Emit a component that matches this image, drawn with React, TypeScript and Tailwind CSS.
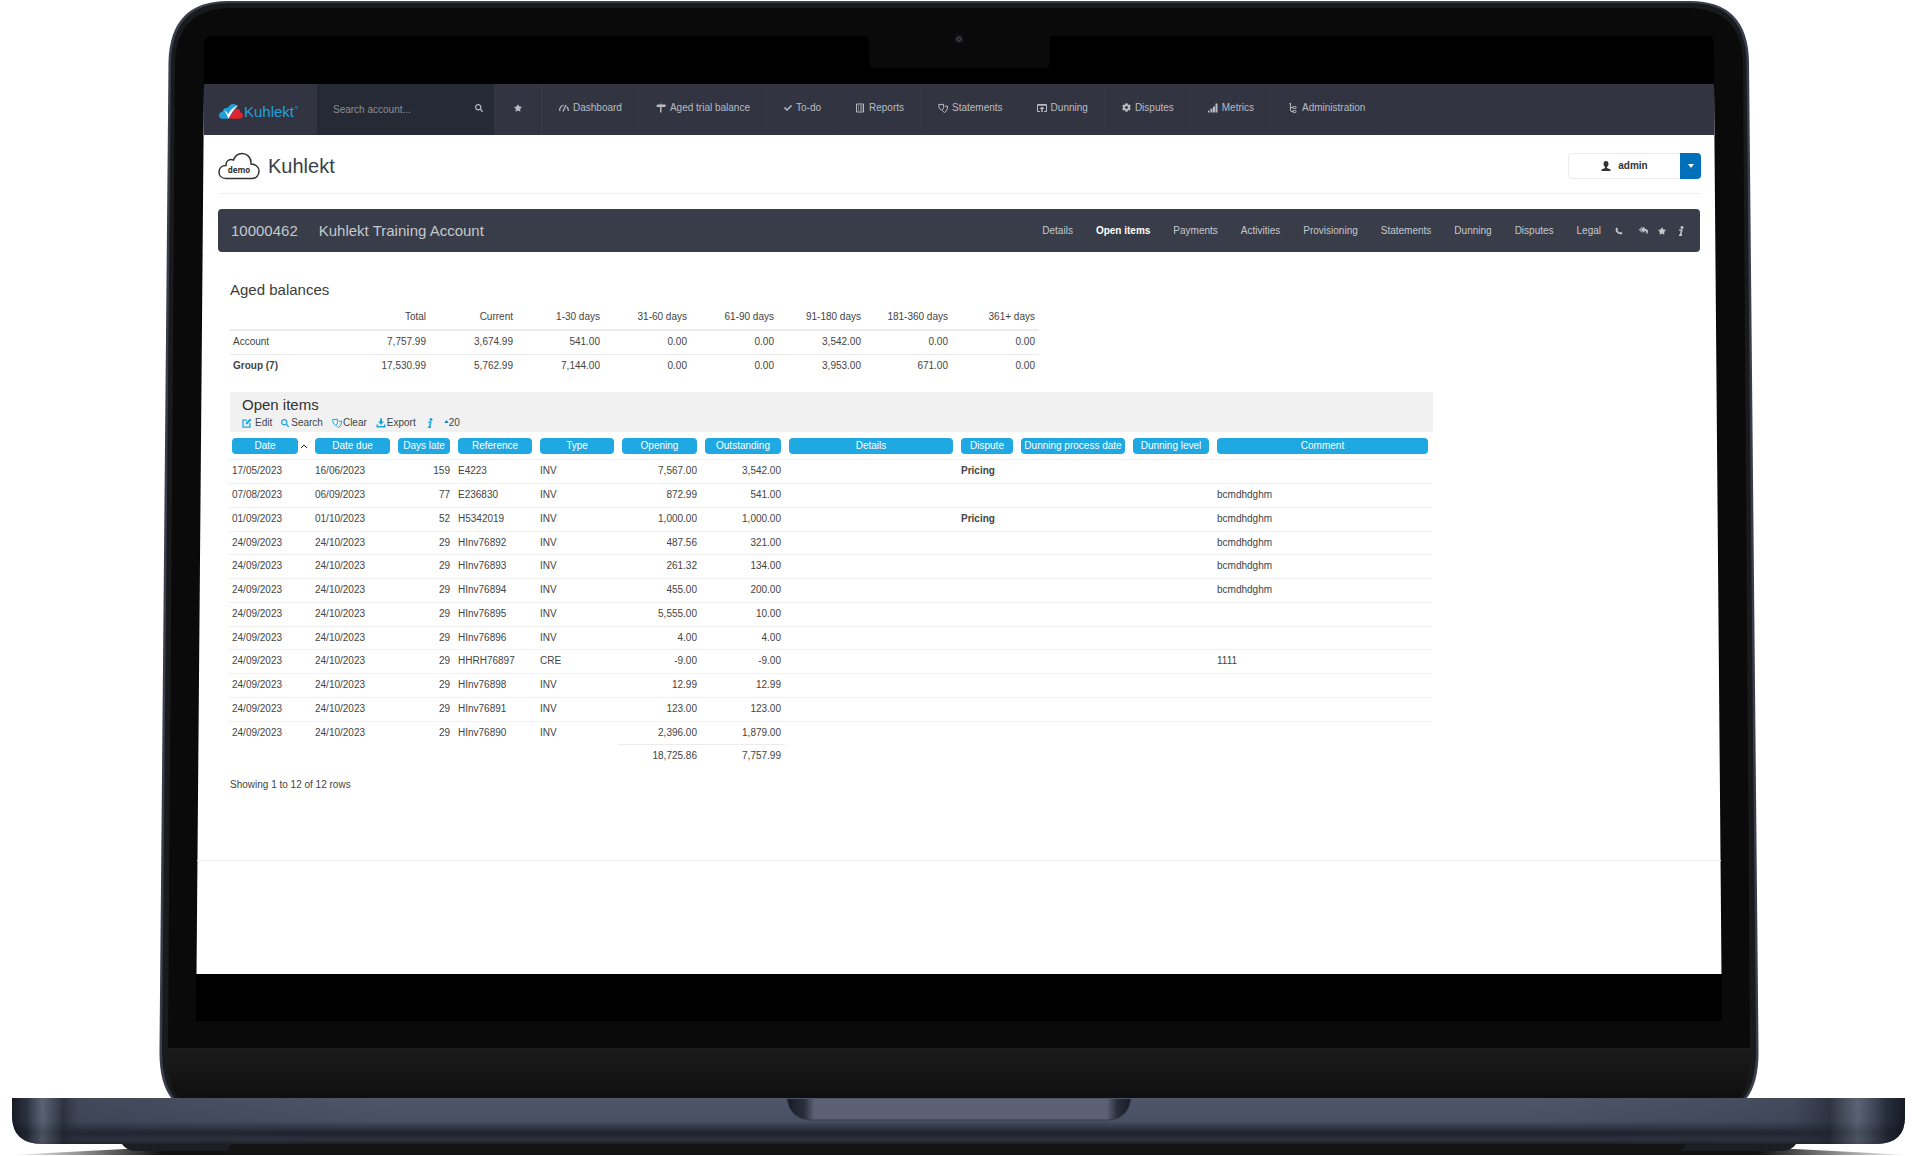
import type { ReactNode } from "react";
import { FaCheck, FaCog, FaPhoneAlt, FaReplyAll, FaSearch, FaStar } from "react-icons/fa";

type Item = {
  date: string;
  due: string;
  late: number;
  reference: string;
  type: string;
  opening: string;
  outstanding: string;
  dispute?: string;
  comment?: string;
};

const items: Item[] = [
  { date: "17/05/2023", due: "16/06/2023", late: 159, reference: "E4223", type: "INV", opening: "7,567.00", outstanding: "3,542.00", dispute: "Pricing" },
  { date: "07/08/2023", due: "06/09/2023", late: 77, reference: "E236830", type: "INV", opening: "872.99", outstanding: "541.00", comment: "bcmdhdghm" },
  { date: "01/09/2023", due: "01/10/2023", late: 52, reference: "H5342019", type: "INV", opening: "1,000.00", outstanding: "1,000.00", dispute: "Pricing", comment: "bcmdhdghm" },
  { date: "24/09/2023", due: "24/10/2023", late: 29, reference: "HInv76892", type: "INV", opening: "487.56", outstanding: "321.00", comment: "bcmdhdghm" },
  { date: "24/09/2023", due: "24/10/2023", late: 29, reference: "HInv76893", type: "INV", opening: "261.32", outstanding: "134.00", comment: "bcmdhdghm" },
  { date: "24/09/2023", due: "24/10/2023", late: 29, reference: "HInv76894", type: "INV", opening: "455.00", outstanding: "200.00", comment: "bcmdhdghm" },
  { date: "24/09/2023", due: "24/10/2023", late: 29, reference: "HInv76895", type: "INV", opening: "5,555.00", outstanding: "10.00" },
  { date: "24/09/2023", due: "24/10/2023", late: 29, reference: "HInv76896", type: "INV", opening: "4.00", outstanding: "4.00" },
  { date: "24/09/2023", due: "24/10/2023", late: 29, reference: "HHRH76897", type: "CRE", opening: "-9.00", outstanding: "-9.00", comment: "1111" },
  { date: "24/09/2023", due: "24/10/2023", late: 29, reference: "HInv76898", type: "INV", opening: "12.99", outstanding: "12.99" },
  { date: "24/09/2023", due: "24/10/2023", late: 29, reference: "HInv76891", type: "INV", opening: "123.00", outstanding: "123.00" },
  { date: "24/09/2023", due: "24/10/2023", late: 29, reference: "HInv76890", type: "INV", opening: "2,396.00", outstanding: "1,879.00" },
];

const columns = [
  { label: "Date", width: "w-[83px]" },
  { label: "Date due", width: "w-[83px]" },
  { label: "Days late", width: "w-[60px]" },
  { label: "Reference", width: "w-[82px]" },
  { label: "Type", width: "w-[82px]" },
  { label: "Opening", width: "w-[83px]" },
  { label: "Outstanding", width: "w-[84px]" },
  { label: "Details", width: "w-[172px]" },
  { label: "Dispute", width: "w-[60px]" },
  { label: "Dunning process date", width: "w-[112px]" },
  { label: "Dunning level", width: "w-[84px]" },
  { label: "Comment", width: "w-[219px]" },
];

const buckets = ["Total", "Current", "1-30 days", "31-60 days", "61-90 days", "91-180 days", "181-360 days", "361+ days"];

const balances = [
  { label: "Account", bold: false, values: ["7,757.99", "3,674.99", "541.00", "0.00", "0.00", "3,542.00", "0.00", "0.00"] },
  { label: "Group (7)", bold: true, values: ["17,530.99", "5,762.99", "7,144.00", "0.00", "0.00", "3,953.00", "671.00", "0.00"] },
];

const tabs = ["Details", "Open items", "Payments", "Activities", "Provisioning", "Statements", "Dunning", "Disputes", "Legal"];

function Glyph({ children, className = "size-[10px]" }: { children: ReactNode; className?: string }) {
  return (
    <svg viewBox="0 0 20 20" className={`shrink-0 ${className}`} fill="none" stroke="currentColor" strokeWidth="2" aria-hidden="true">
      {children}
    </svg>
  );
}

const GaugeIcon = () => (
  <Glyph>
    <path d="M1.500 16c-.5-6 3-10.500 8-11.500M18.500 16c.3-3.500-.8-6.500-3-8.500" strokeWidth="2.500" />
    <path d="M8 17 14 4" strokeWidth="2.500" />
  </Glyph>
);

const SignpostIcon = () => (
  <Glyph>
    <path d="M9 1h2v2h7l2 2-2 3h-7v11H8V8H3L0 6l3-3h6z" fill="currentColor" stroke="none" />
  </Glyph>
);

const ReportIcon = () => (
  <Glyph>
    <path d="M3 2h14v16H3zM6 6h2M6 10h2M6 14h2M10 6h5M10 10h5M10 14h5" />
  </Glyph>
);

const MasksIcon = () => (
  <Glyph>
    <path d="M1.500 2.500c3 1 6 1 9-.5 1 6 1 10-3 12.500C3 13 1 8 1.500 2.500zM13 6c2 1 4 1 6 0 0 6-1 10-6 13-2-1-3-2-4-4" />
  </Glyph>
);

const WindowUpIcon = () => (
  <Glyph>
    <path d="M6 17H1V3h18v14h-5M1 4.500h18" />
    <path d="m10 7 5 5h-3.500v6h-3v-6H5z" fill="currentColor" stroke="none" />
  </Glyph>
);

const BarsIcon = () => (
  <Glyph>
    <path d="M0 15h3v4H0zM5 11h4v8H5zM10 7h4v12h-4zM15 1h4v18h-4z" fill="currentColor" stroke="none" />
  </Glyph>
);

const TreeIcon = () => (
  <Glyph>
    <path d="M5 1v13q0 3 3 3h3M5 9h5M3 1h3" />
    <path d="M10 7h6v4h-6zM10 15h6v4h-6z" strokeWidth="1.500" />
  </Glyph>
);

const InfoIcon = ({ className }: { className?: string }) => (
  <Glyph className={className}>
    <circle cx="12" cy="3" r="3" fill="currentColor" stroke="none" />
    <path d="M6.500 8.500h5L9 18M6 18.500h6" strokeWidth="3" />
  </Glyph>
);

const navItems = [
  { label: "Dashboard", icon: <GaugeIcon /> },
  { label: "Aged trial balance", icon: <SignpostIcon /> },
  { label: "To-do", icon: <FaCheck className="size-2" /> },
  { label: "Reports", icon: <ReportIcon /> },
  { label: "Statements", icon: <MasksIcon /> },
  { label: "Dunning", icon: <WindowUpIcon /> },
  { label: "Disputes", icon: <FaCog className="size-[9px]" /> },
  { label: "Metrics", icon: <BarsIcon /> },
  { label: "Administration", icon: <TreeIcon /> },
];

function Laptop() {
  return (
    <svg viewBox="0 0 1920 1156" preserveAspectRatio="none" className="absolute inset-0 size-full" aria-hidden="true">
      <defs>
        <linearGradient id="base" x1="0" y1="0" x2="0" y2="1">
          <stop offset="0" stopColor="#50566a" />
          <stop offset=".5" stopColor="#485063" />
          <stop offset=".62" stopColor="#343b4a" />
          <stop offset=".76" stopColor="#1c212b" />
          <stop offset=".9" stopColor="#2e313b" />
          <stop offset="1" stopColor="#1c1e24" />
        </linearGradient>
        <linearGradient id="ends" x1="0" y1="0" x2="1" y2="0">
          <stop offset="0" stopColor="#10141c" stopOpacity=".9" />
          <stop offset=".008" stopColor="#1e2430" stopOpacity=".7" />
          <stop offset=".016" stopColor="#626b7c" stopOpacity=".6" />
          <stop offset=".027" stopColor="#20252f" stopOpacity=".7" />
          <stop offset=".036" stopColor="#2a3140" stopOpacity=".35" />
          <stop offset=".2" stopColor="#2a3140" stopOpacity="0" />
          <stop offset=".8" stopColor="#2a3140" stopOpacity="0" />
          <stop offset=".94" stopColor="#2a3140" stopOpacity=".3" />
          <stop offset=".96" stopColor="#20252f" stopOpacity=".7" />
          <stop offset=".975" stopColor="#626b7c" stopOpacity=".6" />
          <stop offset=".99" stopColor="#1e2430" stopOpacity=".8" />
          <stop offset="1" stopColor="#10141c" stopOpacity=".9" />
        </linearGradient>
        <linearGradient id="hinge" x1="0" y1="0" x2="0" y2="1">
          <stop offset="0" stopColor="#1b1b1b" />
          <stop offset="1" stopColor="#0f0f0f" />
        </linearGradient>
        <linearGradient id="grip" x1="0" y1="0" x2="1" y2="0">
          <stop offset="0" stopColor="#171a24" />
          <stop offset=".05" stopColor="#2a2f3c" />
          <stop offset=".08" stopColor="#5c6074" />
          <stop offset=".93" stopColor="#5c6074" />
          <stop offset=".96" stopColor="#2a2f3c" />
          <stop offset="1" stopColor="#171a24" />
        </linearGradient>
        <linearGradient id="shadow" x1="0" y1="0" x2="1" y2="0">
          <stop offset="0" stopColor="#121212" stopOpacity="0" />
          <stop offset=".08" stopColor="#121212" />
          <stop offset=".92" stopColor="#121212" />
          <stop offset="1" stopColor="#121212" stopOpacity="0" />
        </linearGradient>
      </defs>
      <path d="M10 1155 125 1149H1795L1910 1155z" fill="url(#shadow)" />
      <path d="M121 1143H1797q-6 8-14 8H135q-8 0-14-8z" fill="#1c1e24" />
      <path d="M231 1144H1686l-8 10.500H225z" fill="#141414" />
      <path d="M228 1H1690Q1748 1 1749 62L1758.500 1050Q1759 1083 1746 1099H172Q159 1083 159.500 1050L168.500 62Q170 1 228 1z" fill="#3a3d4c" />
      <path d="M228 3H1690Q1745 3 1746.500 62L1756 1050Q1756 1083 1743 1099H175Q162 1083 162 1050L171 62Q173 3 228 3z" fill="#181a1c" />
      <path d="M228 8H1690Q1742 10 1743 62L1750 1048H168L175 62Q177 10 228 8z" fill="#0a0a0a" />
      <path d="M168 1048H1750Q1751 1083 1740 1098H178Q166 1083 168 1048z" fill="url(#hinge)" />
      <path d="M212 36H866q3 0 3 5v20q0 7 7 7h167q7 0 7-7V41q0-5 3-5h653q8 0 8 8L1722 1021H196L204 44q0-8 8-8z" fill="#000" />
      <path d="M204 85H1714L1721.500 974H196.500z" fill="#fff" />
      <path d="M12 1098H1905V1117q0 27-29 27H42q-29 0-30-27z" fill="url(#base)" />
      <path d="M12 1098H1905V1117q0 27-29 27H42q-29 0-30-27z" fill="url(#ends)" />
      <path d="M787 1099H1131q-3 20-22 21H810q-20-1-23-21z" fill="url(#grip)" />
      <path d="M787 1099q3 20 23 21h299q19-1 22-21" fill="none" stroke="#353a48" />
      <circle cx="959" cy="39" r="5" fill="#14151a" />
      <circle cx="959" cy="39" r="2" fill="#1c1d24" stroke="#50525c" />
    </svg>
  );
}

function Logo() {
  return (
    <a href="#" aria-label="Kuhlekt" className="flex w-[113px] shrink-0 items-center gap-px pl-[15px] pt-1">
      <svg viewBox="0 0 70 44" className="h-[15px] w-6 shrink-0" aria-hidden="true">
        <path d="M8 43C2 43 0 38 0 33c0-6 5-10 11-11 1-10 9-12 15-11C30 3 36 0 42 0c6 0 10 3 12 7L28 43z" fill="#1fa0dc" />
        <path d="M30 43C34 30 42 19 50 14c8-2 12 4 12 10 5 1 8 5 8 10s-4 9-10 9z" fill="#df2430" />
        <path d="M15 18q7 3 11 12Q36 12 56 3 38 20 28 43 22 28 15 18z" fill="#fff" />
      </svg>
      <span className="text-[15px] text-[#1fa0dc]">Kuhlekt</span>
      <svg viewBox="0 0 4 4" className="mb-2 size-[3px]" fill="none" stroke="#1fa0dc" aria-hidden="true">
        <circle cx="2" cy="2" r="1.500" />
      </svg>
    </a>
  );
}

function TopNav() {
  return (
    <nav className="flex h-[51px] bg-[#323541] text-[#b9bbc2]">
      <Logo />
      <div className="flex w-[177px] shrink-0 items-center bg-[#252a34] pl-4 pr-[11px]">
        <input
          type="text"
          aria-label="Search account"
          placeholder="Search account..."
          className="min-w-0 flex-1 bg-transparent outline-none placeholder:text-[#8b8e96]"
        />
        <button type="button" aria-label="Search" className="pb-1">
          <FaSearch className="size-2" />
        </button>
      </div>
      <a href="#" aria-label="Favourites" className="flex w-12 shrink-0 items-center justify-center border-r border-[#383c48] pb-1">
        <FaStar className="size-2" />
      </a>
      {navItems.map((item) => (
        <a key={item.label} href="#" className="flex items-center gap-1 whitespace-nowrap border-r border-[#353844] pb-1 pl-[17px] pr-4">
          {item.icon}
          {item.label}
        </a>
      ))}
    </nav>
  );
}

function PageHeader() {
  return (
    <header className="ml-[14px] mr-[13px] flex h-[59px] items-center border-b border-[#f0f0f0] pt-[3px]">
      <svg viewBox="0 0 84 56" className="h-7 w-[42px]" role="img" aria-label="demo">
        <path
          d="M16 53C7 53 2 47 2 40s5-13 14-13c-1-9 7-14 15-11 3-8 9-13 17-13 10 0 18 8 18 18v3c9 0 16 6 16 14 0 9-6 15-14 15z"
          fill="#fff"
          stroke="#333"
          strokeWidth="3"
        />
        <text x="42" y="42" textAnchor="middle" fill="#333" fontSize="16" fontWeight="700" fontFamily="Open Sans, sans-serif">
          demo
        </text>
      </svg>
      <h1 className="ml-2 flex-1 text-xl leading-6 text-[#3a3f48]">Kuhlekt</h1>
      <div className="flex h-[26px]">
        <button type="button" className="flex w-28 items-center justify-center gap-[7px] rounded-l-sm border border-r-0 border-[#ececec] font-bold text-[#333]">
          <svg viewBox="0 0 20 20" className="size-[10px]" fill="currentColor" aria-hidden="true">
            <path d="M10 0c3 0 5 2 5 5s-1 5-3 7v2l7 3v3H1v-3l7-3v-2C6 10 5 8 5 5s2-5 5-5z" />
          </svg>
          admin
        </button>
        <button type="button" aria-label="Account menu" className="flex w-[21px] items-center justify-center rounded-r-sm bg-[#0070bb] text-white">
          <svg viewBox="0 0 6 4" className="h-1 w-[6px]" fill="currentColor" aria-hidden="true">
            <path d="M0 0h6L3 4z" />
          </svg>
        </button>
      </div>
    </header>
  );
}

function AccountBar() {
  return (
    <section className="mx-[14px] mt-[15px] flex h-[43px] items-center rounded-sm bg-[#383d49] pl-[13px] pr-[14px] text-[#c6c8cd]">
      <h2 className="flex flex-1 gap-[21px] text-[15px]">
        <span>10000462</span>
        <span>Kuhlekt Training Account</span>
      </h2>
      <nav className="flex items-center gap-[23px] whitespace-nowrap">
        {tabs.map((tab) => (
          <a key={tab} href="#" className={tab === "Open items" ? "font-bold text-white" : ""}>
            {tab}
          </a>
        ))}
      </nav>
      <div className="ml-[14px] flex items-center gap-[10px]">
        <a href="#" aria-label="Call" className="mr-[6px]">
          <Glyph className="size-2">
            <path d="M4 1C0 4 1 10 5 14s10 6 14 2l-4-4-3 2c-2-1-5-4-6-6l2-3z" fill="currentColor" stroke="none" />
          </Glyph>
        </a>
        <a href="#" aria-label="Reply all"><FaReplyAll className="size-[9px]" /></a>
        <a href="#" aria-label="Favourite"><FaStar className="size-2" /></a>
        <a href="#" aria-label="Info"><InfoIcon /></a>
      </div>
    </section>
  );
}

function AgedBalances() {
  return (
    <section>
      <h3 className="text-[15px] leading-5 text-[#3c3c3c]">Aged balances</h3>
      <table className="mt-1 w-[809px] table-fixed border-collapse text-right">
        <thead>
          <tr className="h-[26px] border-b-2 border-[#ececec]">
            <th aria-label="Balance" className="w-[113px]" />
            {buckets.map((b) => (
              <th key={b} scope="col" className="pr-1 font-normal">
                {b}
              </th>
            ))}
          </tr>
        </thead>
        <tbody>
          {balances.map((row) => (
            <tr key={row.label} className="h-6 border-t border-[#ececec]">
              <th scope="row" className={row.bold ? "pl-[3px] text-left font-bold" : "pl-[3px] text-left font-normal"}>
                {row.label}
              </th>
              {row.values.map((v, i) => (
                <td key={i} className="pr-1">
                  {v}
                </td>
              ))}
            </tr>
          ))}
        </tbody>
      </table>
    </section>
  );
}

function Toolbar() {
  return (
    <div className="mt-[2px] flex items-center gap-[9px]">
      <button type="button" className="flex items-center gap-[3px]">
        <Glyph className="size-[10px] text-[#1fa5dd]">
          <path d="M16 10v8H2V4h8" strokeWidth="2.500" />
          <path d="M7 13l1-4 8-8 3 3-8 8z" fill="currentColor" stroke="none" />
        </Glyph>
        Edit
      </button>
      <button type="button" className="flex items-center gap-[2px]">
        <FaSearch className="size-2 text-[#1fa5dd]" />
        Search
      </button>
      <button type="button" className="flex items-center gap-px">
        <span className="text-[#1fa5dd]"><MasksIcon /></span>
        Clear
      </button>
      <button type="button" className="flex items-center gap-px">
        <Glyph className="size-[10px] text-[#1fa5dd]">
          <path d="M8 1h4v6h4l-6 7-6-7h4zM1 13h3v3h12v-3h3v6H1z" fill="currentColor" stroke="none" />
        </Glyph>
        Export
      </button>
      <button type="button" aria-label="Info" className="text-[#1fa5dd]">
        <InfoIcon />
      </button>
      <button type="button" className="flex items-center">
        <svg viewBox="0 0 6 4" className="mb-1 h-[3px] w-[5px] text-[#1b7fae]" fill="currentColor" aria-hidden="true">
          <path d="M3 0 6 4H0z" />
        </svg>
        20
      </button>
    </div>
  );
}

function OpenItems() {
  return (
    <section className="mt-[14px]">
      <div className="mr-[281px] h-10 bg-[#f1f1f1] pl-3 pt-1">
        <h3 className="text-[15px] leading-[18px] text-[#333]">Open items</h3>
        <Toolbar />
      </div>
      <table className="-ml-[2px] w-[1204px] table-fixed border-collapse text-left">
        <thead>
          <tr className="h-[27px] border-b border-[#f3f3f3]">
            {columns.map((c) => (
              <th key={c.label} scope="col" className={`px-1 pt-[2px] font-normal ${c.width}`}>
                <span className="flex items-center gap-[3px]">
                  <button type="button" className="h-4 flex-1 whitespace-nowrap rounded-sm bg-[#1fa8e1] text-center text-white">
                    {c.label}
                  </button>
                  {c.label === "Date" && (
                    <svg viewBox="0 0 6 4" className="h-1 w-[6px]" fill="none" stroke="#333" aria-hidden="true">
                      <path d="m0 4 3-3 3 3" />
                    </svg>
                  )}
                </span>
              </th>
            ))}
          </tr>
        </thead>
        <tbody>
          {items.map((r) => (
            <tr key={r.reference} className="h-6 border-b border-[#f1f1f1] last:border-b-0 nth-[4n]:h-[23px]">
              <td className="px-1">{r.date}</td>
              <td className="px-1">{r.due}</td>
              <td className="px-1 text-right">{r.late}</td>
              <td className="px-1">{r.reference}</td>
              <td className="px-1">{r.type}</td>
              <td className="px-1 text-right">{r.opening}</td>
              <td className="px-1 text-right">{r.outstanding}</td>
              <td />
              <td className="px-1 font-bold">{r.dispute}</td>
              <td />
              <td />
              <td className="px-1">{r.comment}</td>
            </tr>
          ))}
        </tbody>
        <tfoot>
          <tr className="h-6 text-right">
            <td colSpan={5} />
            <td className="border-t border-[#ececec] px-1">18,725.86</td>
            <td className="border-t border-[#ececec] px-1">7,757.99</td>
            <td colSpan={5} />
          </tr>
        </tfoot>
      </table>
      <p className="mt-[10px]">Showing 1 to 12 of 12 rows</p>
    </section>
  );
}

export default function App() {
  return (
    <div className="relative min-h-screen bg-white font-['Liberation_Sans',Arial,sans-serif] text-[10px] leading-[14px] text-[#444]">
      <Laptop />
      <div className="relative pl-[204px] pr-[206px] pt-[84px]">
        <TopNav />
        <PageHeader />
        <AccountBar />
        <main className="ml-[26px] mt-7">
          <AgedBalances />
          <OpenItems />
        </main>
        <hr className="-mx-[7px] mt-[68px] border-[#f0f0f0]" />
      </div>
    </div>
  );
}
